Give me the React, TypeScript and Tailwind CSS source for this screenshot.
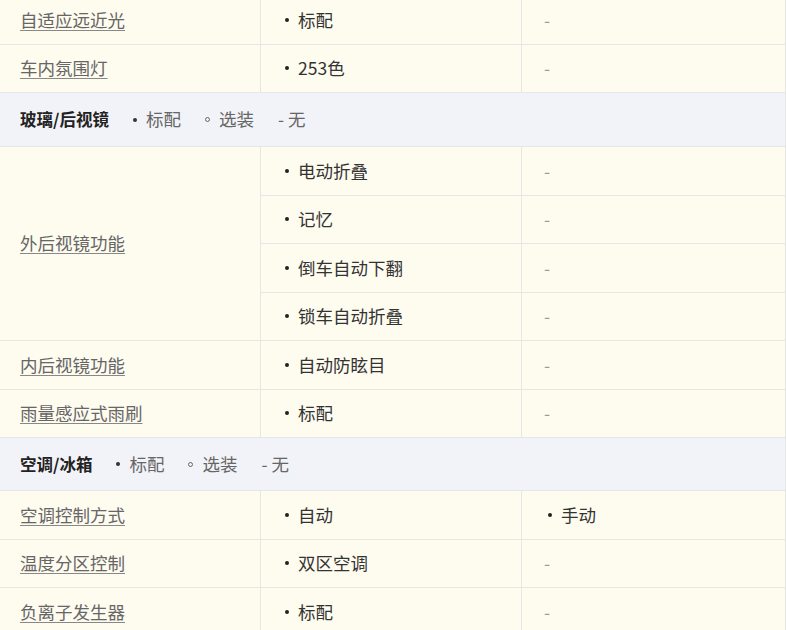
const F = { fontFamily: '"Noto Sans CJK SC", "Noto Sans", sans-serif' };

function Dot() {
  return <span className="inline-block w-[4px] h-[4px] rounded-full bg-[#222] ml-[4px] mr-[9px]" />;
}
function Name({ t }: { t: string }) {
  return <span className="text-[#666] underline underline-offset-[3px] decoration-[#888]">{t}</span>;
}
function Val({ t }: { t: string }) {
  if (t === "-") return <span className="text-[#999]">-</span>;
  return (
    <span className="flex items-center text-[#333]">
      <Dot />
      {t}
    </span>
  );
}
const cell = "flex items-center border-b border-r border-[#e6e6e6] h-[48.5px]";

function Row({ a, b, c }: { a: string; b: string; c: string }) {
  return (
    <>
      <div className={cell + " pl-[20px]"}><Name t={a} /></div>
      <div className={cell + " pl-[20px]"}><Val t={b} /></div>
      <div className={cell + " pl-[22px]"}><Val t={c} /></div>
    </>
  );
}
function Section({ t, h }: { t: string; h: string }) {
  return (
    <div className={"col-span-3 flex items-center bg-[#f2f3f8] border-b border-r border-[#e6e6e6] pl-[20px] " + h}>
      <span className="font-bold text-[#222] mr-[24px] text-[16.5px]">{t}</span>
      <span className="text-[#666] flex items-center mr-[24px]"><span className="inline-block w-[4px] h-[4px] rounded-full bg-[#333] mr-[9px]" />标配</span>
      <span className="text-[#666] flex items-center mr-[24px]"><span className="inline-block w-[5px] h-[5px] rounded-full border border-[#666] mr-[9px]" />选装</span>
      <span className="text-[#666]">- 无</span>
    </div>
  );
}

export default function App() {
  return (
    <div className="w-[786px] h-[630px] overflow-hidden bg-white" style={F}>
      <div className="mt-[-4px] w-[786px] grid grid-cols-[261px_261px_264px] bg-[#fefbef] text-[17.5px]">
        <Row a="自适应远近光" b="标配" c="-" />
        <Row a="车内氛围灯" b="253色" c="-" />
        <Section t="玻璃/后视镜" h="h-[54px]" />
        <div className={"row-span-4 flex items-center border-b border-r border-[#e6e6e6] pl-[20px]"}><Name t="外后视镜功能" /></div>
        <div className={cell + " pl-[20px]"}><Val t="电动折叠" /></div>
        <div className={cell + " pl-[22px]"}><Val t="-" /></div>
        <div className={cell + " pl-[20px]"}><Val t="记忆" /></div>
        <div className={cell + " pl-[22px]"}><Val t="-" /></div>
        <div className={cell + " pl-[20px]"}><Val t="倒车自动下翻" /></div>
        <div className={cell + " pl-[22px]"}><Val t="-" /></div>
        <div className={cell + " pl-[20px]"}><Val t="锁车自动折叠" /></div>
        <div className={cell + " pl-[22px]"}><Val t="-" /></div>
        <Row a="内后视镜功能" b="自动防眩目" c="-" />
        <Row a="雨量感应式雨刷" b="标配" c="-" />
        <Section t="空调/冰箱" h="h-[53px]" />
        <Row a="空调控制方式" b="自动" c="手动" />
        <Row a="温度分区控制" b="双区空调" c="-" />
        <Row a="负离子发生器" b="标配" c="-" />
      </div>
    </div>
  );
}
